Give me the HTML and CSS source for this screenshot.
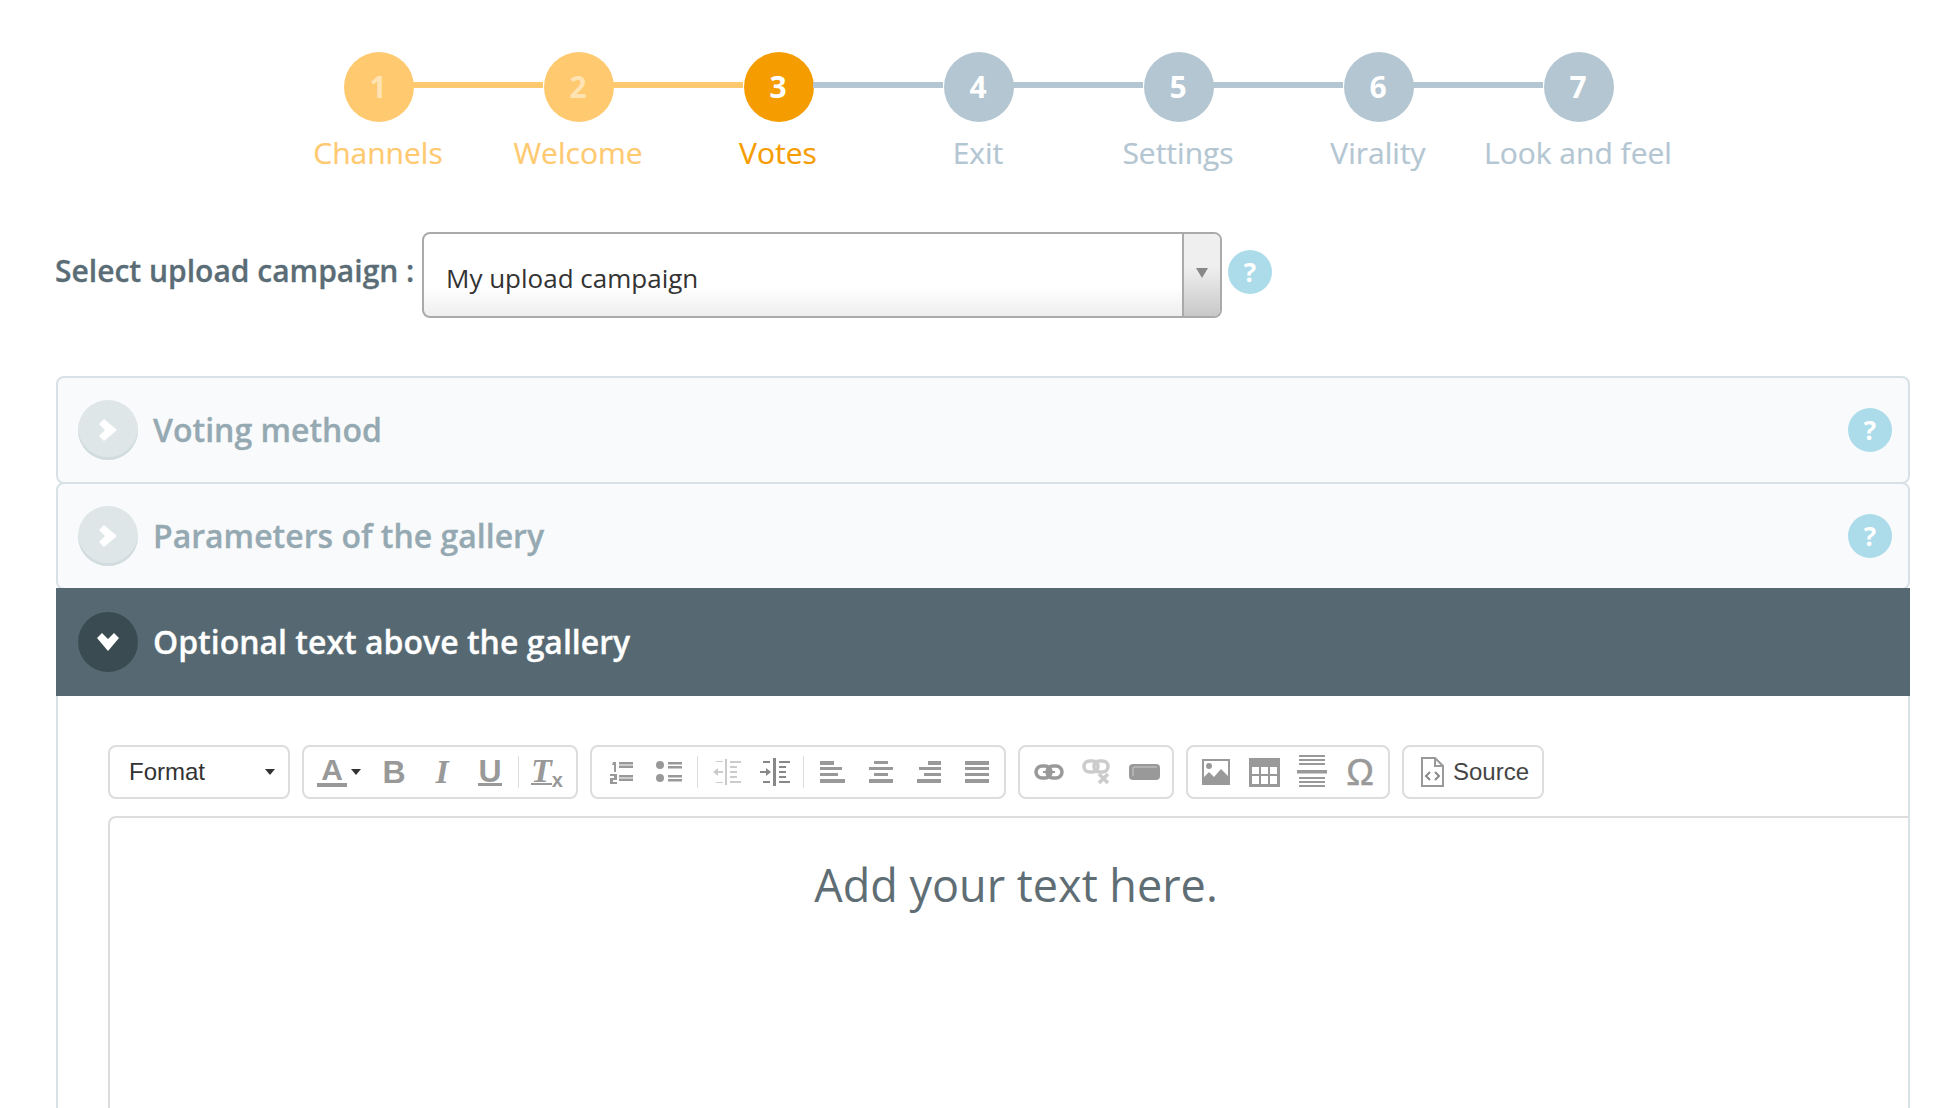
FILE: index.html
```html
<!DOCTYPE html>
<html lang="en">
<head>
<meta charset="utf-8">
<title>Votes</title>
<link rel="stylesheet" href="styles.css">
</head>
<body>
<div class="page">
  <ol class="stepper">
    <li class="step done"><span class="dot">1</span><span class="lbl">Channels</span></li>
    <li class="step done"><span class="dot">2</span><span class="lbl">Welcome</span></li>
    <li class="step current"><span class="dot">3</span><span class="lbl">Votes</span></li>
    <li class="step"><span class="dot">4</span><span class="lbl">Exit</span></li>
    <li class="step"><span class="dot">5</span><span class="lbl">Settings</span></li>
    <li class="step"><span class="dot">6</span><span class="lbl">Virality</span></li>
    <li class="step last"><span class="dot">7</span><span class="lbl">Look and feel</span></li>
  </ol>

  <div class="campaign">
    <label class="campaign-label">Select upload campaign :</label>
    <div class="select">
      <span class="select-value">My upload campaign</span>
      <span class="select-arrow"><i class="tri"></i></span>
    </div>
    <span class="help">?</span>
  </div>

  <div class="accordion">
    <div class="panel">
      <span class="toggle"><svg width="18" height="22" viewBox="0 0 18 22"><path d="M0 5l5-5 13 11L5 22l-5-5 6-6z" fill="#fff"/></svg></span>
      <span class="panel-title">Voting method</span>
      <span class="help">?</span>
    </div>
    <div class="panel">
      <span class="toggle"><svg width="18" height="22" viewBox="0 0 18 22"><path d="M0 5l5-5 13 11L5 22l-5-5 6-6z" fill="#fff"/></svg></span>
      <span class="panel-title">Parameters of the gallery</span>
      <span class="help">?</span>
    </div>
    <div class="panel open">
      <span class="toggle"><svg width="22" height="18" viewBox="0 0 22 18"><path d="M5 0l6 6 6-6 5 5-11 13L0 5z" fill="#fff"/></svg></span>
      <span class="panel-title">Optional text above the gallery</span>
    </div>
    <div class="panel-body">
      <div class="toolbar">
        <div class="group g-format"><span class="format-text">Format</span><i class="caret"></i></div>

        <div class="group g-text">
          <span class="btn btn-color"><span class="ic-a">A</span><i class="caret small"></i></span>
          <span class="btn ic-b">B</span>
          <span class="btn ic-i">I</span>
          <span class="btn ic-u"><span>U</span></span>
          <i class="sep"></i>
          <span class="btn ic-t"><span>T</span><sub>x</sub></span>
        </div>

        <div class="group g-para">
          <span class="btn"><svg width="26" height="26" viewBox="0 0 26 26"><g fill="#999"><rect x="11" y="3" width="14" height="2.5"/><rect x="11" y="6.5" width="14" height="2.5"/><rect x="11" y="16" width="14" height="2.5"/><rect x="11" y="19.5" width="14" height="2.5"/><path d="M5 3h3v10H6V6H4zM2 15h7v6H5v2h4v2H2v-6h4v-2H2z"/></g></svg></span>
          <span class="btn"><svg width="28" height="26" viewBox="0 0 28 26"><g fill="#999"><circle cx="5" cy="6" r="4"/><circle cx="5" cy="19" r="4"/><rect x="13" y="3" width="14" height="2.5"/><rect x="13" y="7" width="14" height="2.5"/><rect x="13" y="16" width="14" height="2.5"/><rect x="13" y="20" width="14" height="2.5"/></g></svg></span>
          <i class="sep"></i>
          <span class="btn faint"><svg width="28" height="28" viewBox="0 0 28 28"><g fill="#999"><rect x="12" y="1" width="2" height="26"/><rect x="17" y="3" width="11" height="2"/><rect x="17" y="8" width="7" height="2"/><rect x="17" y="13" width="7" height="2"/><rect x="17" y="18" width="7" height="2"/><rect x="17" y="23" width="11" height="2"/><rect x="3" y="3" width="7" height="1"/><rect x="3" y="24" width="7" height="1"/><path d="M0 14l5-4v3h5v2H5v3z"/></g></svg></span>
          <span class="btn"><svg width="30" height="28" viewBox="0 0 30 28"><g fill="#888"><rect x="13" y="0" width="3" height="28"/><rect x="19" y="3" width="11" height="2"/><rect x="19" y="8" width="7" height="2"/><rect x="19" y="13" width="7" height="2"/><rect x="19" y="18" width="7" height="2"/><rect x="19" y="23" width="11" height="2"/><rect x="3" y="3" width="7" height="2"/><rect x="3" y="23" width="7" height="2"/><path d="M11 14l-5-4v3H0v2h6v3z"/></g></svg></span>
          <i class="sep"></i>
          <span class="btn"><svg width="26" height="24" viewBox="0 0 26 24"><g fill="#999"><rect x="0" y="1" width="14" height="4"/><rect x="0" y="7" width="22" height="3"/><rect x="0" y="13" width="18" height="3"/><rect x="0" y="19" width="25" height="4"/></g></svg></span>
          <span class="btn"><svg width="26" height="24" viewBox="0 0 26 24"><g fill="#999"><rect x="6" y="1" width="14" height="3"/><rect x="1" y="7" width="24" height="3"/><rect x="6" y="13" width="14" height="3"/><rect x="1" y="19" width="24" height="4"/></g></svg></span>
          <span class="btn"><svg width="26" height="24" viewBox="0 0 26 24"><g fill="#999"><rect x="12" y="1" width="13" height="4"/><rect x="3" y="7" width="22" height="3"/><rect x="8" y="13" width="17" height="3"/><rect x="1" y="19" width="24" height="4"/></g></svg></span>
          <span class="btn"><svg width="26" height="24" viewBox="0 0 26 24"><g fill="#999"><rect x="1" y="1" width="24" height="4"/><rect x="1" y="7" width="24" height="3"/><rect x="1" y="13" width="24" height="3"/><rect x="1" y="19" width="24" height="4"/></g></svg></span>
        </div>

        <div class="group g-links">
          <span class="btn"><svg width="30" height="18" viewBox="0 0 30 18"><g fill="none" stroke="#999" stroke-width="3.5"><rect x="2" y="3" width="15" height="12" rx="6"/><rect x="13" y="3" width="15" height="12" rx="6"/></g><rect x="9" y="8" width="12" height="2" fill="#999"/></svg></span>
          <span class="btn faint"><svg width="30" height="26" viewBox="0 0 30 26"><g fill="none" stroke="#999" stroke-width="3.5"><rect x="2" y="2" width="14" height="11" rx="5.5"/><rect x="12" y="2" width="14" height="11" rx="5.5"/><path d="M17 15l9 9M26 15l-9 9"/></g></svg></span>
          <span class="btn"><svg width="32" height="18" viewBox="0 0 32 18"><rect x="0" y="1" width="31" height="16" rx="4" fill="#999"/><path d="M4 13V6q0-2 2-2h22" fill="none" stroke="#bbb" stroke-width="1.5"/></svg></span>
        </div>

        <div class="group g-insert">
          <span class="btn"><svg width="28" height="26" viewBox="0 0 28 26"><rect x="1" y="1" width="26" height="24" fill="#fff" stroke="#999" stroke-width="2"/><circle cx="7" cy="7" r="3" fill="#999"/><path d="M2 24v-6l5-5 5 5 7-8 7 7v7z" fill="#999"/></svg></span>
          <span class="btn"><svg width="31" height="29" viewBox="0 0 31 29"><path fill="#999" fill-rule="evenodd" d="M0 0h31v29H0zM3 9v7h7V9zm9 0v7h7V9zm9 0v7h7V9zM3 18v8h7v-8zm9 0v8h7v-8zm9 0v8h7v-8z"/></svg></span>
          <span class="btn"><svg width="30" height="34" viewBox="0 0 30 34"><g fill="#999"><rect x="2" y="0" width="26" height="2"/><rect x="2" y="4" width="26" height="2"/><rect x="2" y="8" width="26" height="2"/><rect x="0" y="15" width="30" height="3.5"/><rect x="2" y="22" width="26" height="2"/><rect x="2" y="26" width="26" height="2"/><rect x="2" y="30" width="26" height="2"/></g></svg></span>
          <span class="btn ic-omega">Ω</span>
        </div>

        <div class="group g-source">
          <svg class="doc" width="23" height="30" viewBox="0 0 23 30"><path d="M1 1h13l8 8v20H1z" fill="#fff" stroke="#999" stroke-width="2"/><path d="M14 1v8h8" fill="none" stroke="#999" stroke-width="2"/><path d="M9 15l-4 4 4 4M14 15l4 4-4 4" fill="none" stroke="#888" stroke-width="2"/></svg>
          <span class="source-text">Source</span>
        </div>
      </div>

      <div class="editor">
        <p class="editor-text">Add your text here.</p>
      </div>
    </div>
  </div>
</div>
</body>
</html>
```

FILE: styles.css
```css
* { box-sizing: border-box; }
html, body { margin: 0; padding: 0; background: #fff; }
body { height: 1108px; overflow: hidden; font-family: "Open Sans", sans-serif; }
.page { width: 1950px; padding: 52px 40px 0 56px; }

/* stepper */
.stepper { list-style: none; display: flex; margin: 0 0 0 222px; padding: 0; height: 180px; }
.step { position: relative; width: 200px; display: flex; flex-direction: column; align-items: center; color: #b3c6d2; }
.step::after { content: ""; position: absolute; left: 135px; width: 130px; top: 30px; height: 6px; background: #b3c6d2; }
.step.last::after { display: none; }
.step.done { color: #fec96f; }
.step.done::after { background: #fec96f; }
.step.current { color: #f59d00; }
.dot { width: 70px; height: 70px; margin-left: 2px; padding-right: 2px; border-radius: 50%; background: #b3c6d2; color: #fff; font-size: 30px; font-weight: 700; display: flex; align-items: center; justify-content: center; line-height: 1; }
.done .dot { background: #fec96f; color: #ffe3b3; }
.current .dot { background: #f59d00; color: #fff; }
.lbl { font-size: 30px; line-height: 40px; margin-top: 11px; white-space: nowrap; -webkit-text-stroke: .2px currentColor; }

/* campaign select */
.campaign { display: flex; align-items: center; height: 86px; margin-bottom: 58px; }
.campaign-label { width: 367px; margin-left: -1px; padding-bottom: 10px; font-size: 30px; font-weight: 600; color: #5a6c75; white-space: nowrap; -webkit-text-stroke: .3px currentColor; }
.select { width: 800px; height: 86px; border: 2px solid #aaa; border-radius: 8px; display: flex; background: linear-gradient(#fff 0, #fff 65%, #eee 100%); }
.select-value { flex: 1; padding: 26px 0 0 22px; font-size: 26px; line-height: 36px; color: #333; }
.select-arrow { width: 38px; border-left: 2px solid #aaa; background: linear-gradient(#efefef 0, #efefef 40%, #c8c8c8 100%); display: flex; align-items: center; justify-content: center; border-radius: 0 6px 6px 0; padding-bottom: 5px; }
.tri { width: 0; height: 0; border: 6px solid transparent; border-top: 10px solid #888; border-bottom: 0; }
.help { width: 44px; height: 44px; border-radius: 50%; background: #acdcea; color: #fff; font-size: 26px; font-weight: 700; display: flex; align-items: center; justify-content: center; line-height: 1; flex: none; }
.campaign .help { margin: 0 0 7px 6px; }

/* accordion */
.accordion { width: 1854px; }
.panel { height: 108px; border: 2px solid #d8e1e5; border-radius: 8px; background: #f9fafb; display: flex; align-items: center; padding: 0 16px 0 20px; }
.panel + .panel { margin-top: -2px; }
.panel.open { background: #566972; border: 0; border-radius: 0; padding: 0 18px 0 22px; }
.toggle { width: 60px; height: 60px; border-radius: 50%; background: #dee6e8; box-shadow: inset 0 -3px 0 #d2dcdf; display: flex; align-items: center; justify-content: center; flex: none; }
.open .toggle { background: #3b4b52; box-shadow: none; }
.panel-title { flex: 1; margin-left: 15px; padding-bottom: 1px; font-size: 32px; font-weight: 600; color: #95a9b2; white-space: nowrap; -webkit-text-stroke: .3px currentColor; }
.open .panel-title { color: #fff; }
.panel-body { border: solid #d8e1e5; border-width: 0 2px; height: 420px; padding: 49px 0 0 50px; }

/* toolbar */
.toolbar { display: flex; gap: 12px; height: 54px; }
.group { height: 54px; border: 2px solid #ddd; border-radius: 8px; display: flex; align-items: center; padding: 0 4px; background: #fff; flex: none; }
.g-format { width: 182px; padding: 0 13px 0 19px; justify-content: space-between; }
.g-text { width: 276px; }
.g-para { width: 416px; padding-left: 5px; }
.g-links { width: 156px; padding-left: 5px; }
.g-insert { width: 204px; }
.g-source { width: 142px; padding: 0 0 0 17px; }
.format-text, .source-text { font-family: "Liberation Sans", Arial, sans-serif; font-size: 24px; color: #333; }
.source-text { margin-left: 9px; color: #444; }
.caret { width: 0; height: 0; border: 5px solid transparent; border-top: 6px solid #333; border-bottom: 0; }
.caret.small { margin-left: 4px; }
.btn { width: 48px; height: 40px; display: flex; align-items: center; justify-content: center; flex: none; color: #999; font-family: "Liberation Sans", Arial, sans-serif; font-size: 32px; font-weight: 700; line-height: 1; }
.btn svg { filter: blur(.4px); }
.faint { opacity: .5; }
.sep { width: 1px; height: 32px; margin: 0 4px; background: #ddd; flex: none; }
.g-para .sep { margin-right: 5px; }
.btn-color { width: 62px; }
.ic-a { border-bottom: 4px solid #999; font-size: 30px; line-height: 26px; width: 30px; text-align: center; }
.ic-i { font-family: "Liberation Serif", serif; font-style: italic; font-size: 34px; }
.ic-u span { border-bottom: 3px solid #999; line-height: 24px; }
.ic-t { font-family: "Liberation Serif", serif; font-style: italic; font-size: 34px; }
.ic-t span { border-bottom: 2px solid #999; line-height: 24px; }
.ic-t sub { font-family: "Liberation Sans", sans-serif; font-style: normal; font-size: 20px; line-height: 1; vertical-align: baseline; margin-top: 16px; }
.ic-omega { font-family: "Liberation Sans", sans-serif; font-size: 37px; font-weight: 400; -webkit-text-stroke: .5px currentColor; }

/* editor */
.editor { margin-top: 17px; height: 400px; border: solid #ddd; border-width: 2px 0 0 2px; border-radius: 8px 0 0 0; text-align: center; padding-left: 14px; }
.editor-text { margin: 37px 0 0; font-size: 45px; line-height: 60px; color: #5f6e74; }
```
